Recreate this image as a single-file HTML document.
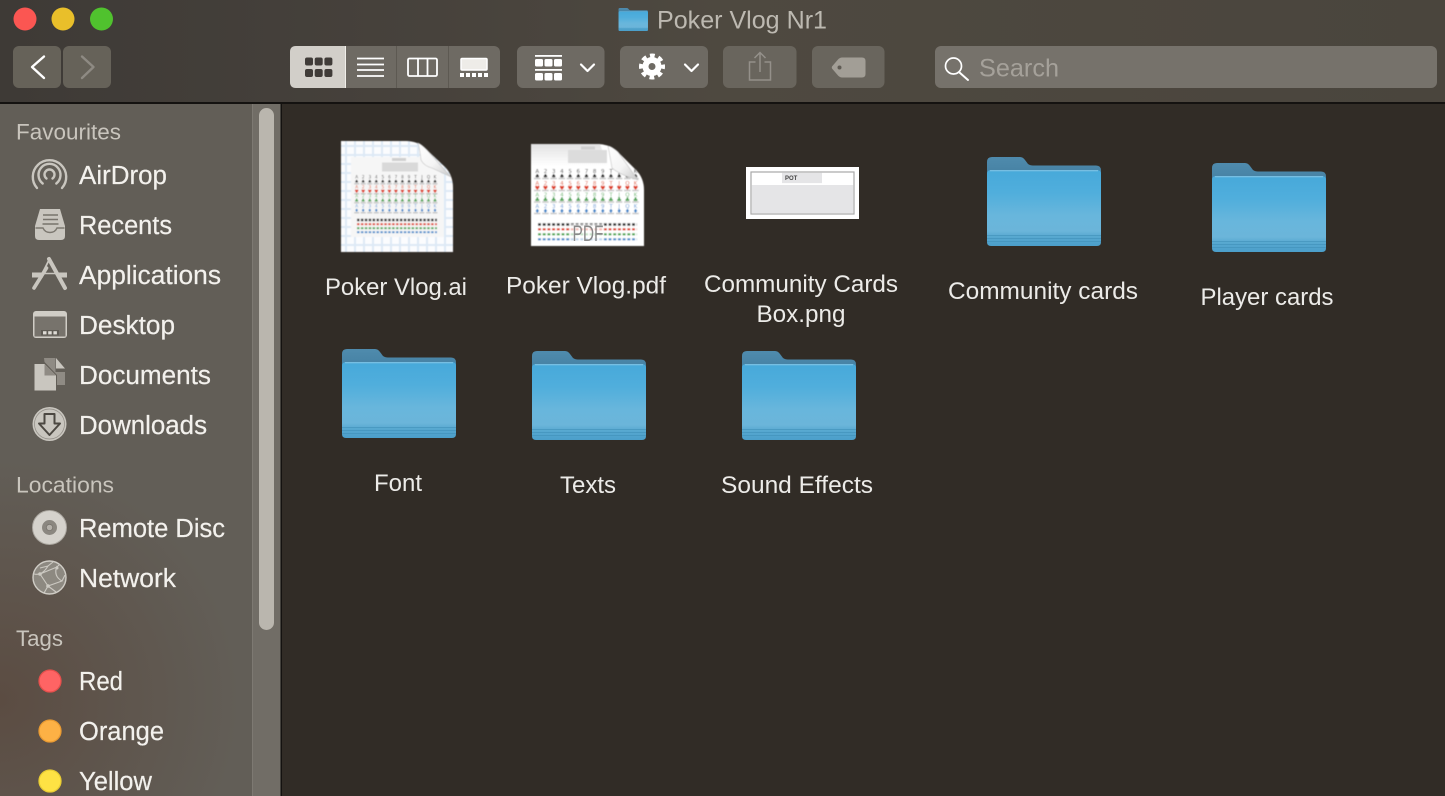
<!DOCTYPE html>
<html><head><meta charset="utf-8"><title>Poker Vlog Nr1</title>
<style>
html,body{margin:0;padding:0;background:#312c26;width:1445px;height:796px;overflow:hidden}
svg{display:block}
text{font-family:"Liberation Sans",sans-serif}
.s{font-size:25.5px;fill:#f3f1ed;stroke:#f3f1ed;stroke-width:.2}
.h{font-size:22px;fill:#c9c5bd}
.f{font-size:23.8px;fill:#ecebe8;text-anchor:middle}
.t{font-family:"DejaVu Sans","Liberation Sans",sans-serif;text-anchor:middle}
</style></head><body>
<svg width="1445" height="796" viewBox="0 0 1445 796" xmlns="http://www.w3.org/2000/svg">
<defs>
<linearGradient id="tb" x1="0" y1="0" x2="1" y2="0"><stop offset="0" stop-color="#3e3a36"/><stop offset=".3" stop-color="#47423c"/><stop offset=".5" stop-color="#4e4940"/><stop offset="1" stop-color="#4a453d"/></linearGradient>
<radialGradient id="br" gradientUnits="userSpaceOnUse" cx="0" cy="700" r="240"><stop offset="0" stop-color="#5b4c42"/><stop offset="1" stop-color="#5b4c42" stop-opacity="0"/></radialGradient>
<linearGradient id="fb" x1="0" y1="0" x2="0" y2="1"><stop offset="0" stop-color="#47a9da"/><stop offset=".3" stop-color="#50aedc"/><stop offset=".6" stop-color="#68b6dc"/><stop offset=".8" stop-color="#6bb5da"/><stop offset=".88" stop-color="#57a8d0"/><stop offset="1" stop-color="#4b9fca"/></linearGradient>
<linearGradient id="tab" x1="0" y1="0" x2="0" y2="1"><stop offset="0" stop-color="#4f8bad"/><stop offset="1" stop-color="#3f7a9c"/></linearGradient>
<linearGradient id="fold" x1="0" y1="0" x2="1" y2="1"><stop offset="0" stop-color="#ffffff"/><stop offset=".55" stop-color="#f4f4f4"/><stop offset="1" stop-color="#c8c8c8"/></linearGradient>
<linearGradient id="shade" x1="0" y1="0" x2="0" y2="1"><stop offset="0" stop-color="#e2e2e2"/><stop offset="1" stop-color="#ffffff"/></linearGradient>
<symbol id="folder" viewBox="0 0 114 89" width="114" height="89" overflow="visible">
<path d="M0 5Q0 0 5 0H33Q36 0 38 3L41 7Q43 8.500 46 8.500H109Q114 8.500 114 13.500V30H0Z" fill="url(#tab)"/>
<path d="M0 17Q0 13 4 13H110Q114 13 114 17V85Q114 89 110 89H4Q0 89 0 85Z" fill="url(#fb)"/>
<path d="M3 13.700H111" stroke="#86c6e4" stroke-width="1" fill="none"/>
<path d="M0 78.500H114M0 81.500H114M0 84.500H114" stroke="#3f90b9" stroke-width="1" opacity=".6"/>
</symbol>
<pattern id="grid" width="9" height="9" patternUnits="userSpaceOnUse" x="341" y="141"><rect width="9" height="9" fill="#fbfcfe"/><rect width="2" height="9" x="4" fill="#dde9f5"/><rect width="9" height="2" y="4" fill="#dde9f5"/></pattern>
<filter id="soft2" x="-5%" y="-5%" width="110%" height="110%"><feGaussianBlur stdDeviation=".45"/></filter>
</defs>

<!-- base -->
<rect width="1445" height="796" fill="#312c26"/>
<rect width="1445" height="102" fill="url(#tb)"/>
<rect y="102" width="1445" height="2" fill="#141210"/>
<rect y="104" width="252" height="692" fill="#625e57"/>
<rect y="104" width="252" height="692" fill="url(#br)"/>
<rect x="252" y="104" width="29" height="692" fill="#716d66"/>
<rect x="252" y="104" width="1" height="692" fill="#7d7972"/>
<rect x="280.500" y="104" width="1.500" height="692" fill="#141210"/>
<rect x="259" y="108" width="15" height="522" rx="7.5" fill="#bab6ae"/>

<!-- traffic lights -->
<circle cx="25" cy="19" r="11.5" fill="#fb5652"/>
<circle cx="63" cy="19" r="11.5" fill="#e9bf2a"/>
<circle cx="101.500" cy="19" r="11.5" fill="#50c22e"/>

<!-- title -->
<g transform="translate(618.5,8)"><use href="#folder" width="29.500" height="23"/></g>
<text x="657" y="28.500" font-size="25" fill="#bdb9b1" textLength="170" lengthAdjust="spacingAndGlyphs">Poker Vlog Nr1</text>

<!-- nav -->
<rect x="13" y="46" width="48" height="42" rx="6" fill="#666259"/>
<rect x="63" y="46" width="48" height="42" rx="6" fill="#666259"/>
<path d="M44 56.500L32 67L44 78" fill="none" stroke="#fff" stroke-width="2.400" stroke-linecap="round" stroke-linejoin="round"/>
<path d="M82 56.500L93.500 67L82 78" fill="none" stroke="#8e8a83" stroke-width="2.400" stroke-linecap="round" stroke-linejoin="round"/>

<!-- view segmented -->
<rect x="290" y="46" width="210" height="42" rx="6" fill="#6e6a63"/>
<path d="M296 46H345V88H296Q290 88 290 82V52Q290 46 296 46Z" fill="#d2cfc9"/>
<rect x="345" y="46" width="1" height="42" fill="#f0eee9"/>
<rect x="396" y="46" width="1" height="42" fill="#5d5952"/>
<rect x="448" y="46" width="1" height="42" fill="#5d5952"/>
<g fill="#403c38">
<rect x="305" y="57.500" width="8" height="8" rx="2"/><rect x="314.700" y="57.500" width="8" height="8" rx="2"/><rect x="324.400" y="57.500" width="8" height="8" rx="2"/>
<rect x="305" y="69" width="8" height="8" rx="2"/><rect x="314.700" y="69" width="8" height="8" rx="2"/><rect x="324.400" y="69" width="8" height="8" rx="2"/>
</g>
<path d="M357 58.500H384M357 64.500H384M357 70H384M357 76H384" stroke="#fff" stroke-width="1.700"/>
<rect x="408" y="58.500" width="29" height="17.500" rx="1.500" fill="none" stroke="#fff" stroke-width="1.800"/>
<path d="M418 58.500V76M427.500 58.500V76" stroke="#fff" stroke-width="1.800"/>
<rect x="461" y="58.500" width="26" height="11.500" rx="1" fill="#eeece8" stroke="#fff" stroke-width="1.500"/>
<g fill="#fff"><rect x="460" y="73" width="4" height="4"/><rect x="466" y="73" width="4" height="4"/><rect x="472" y="73" width="4" height="4"/><rect x="478" y="73" width="4" height="4"/><rect x="484" y="73" width="4" height="4"/></g>

<!-- arrange -->
<rect x="517" y="46" width="87.500" height="42" rx="6" fill="#6e6a63"/>
<g fill="#fff">
<rect x="535" y="55" width="27" height="1.800"/>
<rect x="535" y="59" width="8" height="7.500" rx="1.500"/><rect x="544.500" y="59" width="8" height="7.500" rx="1.500"/><rect x="554" y="59" width="8" height="7.500" rx="1.500"/>
<rect x="535" y="69" width="27" height="1.800"/>
<rect x="535" y="73" width="8" height="7.500" rx="1.500"/><rect x="544.500" y="73" width="8" height="7.500" rx="1.500"/><rect x="554" y="73" width="8" height="7.500" rx="1.500"/>
</g>
<path d="M581 64.500L587.500 71L594 64.500" fill="none" stroke="#fff" stroke-width="2.200" stroke-linecap="round" stroke-linejoin="round"/>

<!-- gear -->
<rect x="620" y="46" width="88" height="42" rx="6" fill="#6e6a63"/>
<circle cx="652" cy="66.500" r="6.500" fill="none" stroke="#fff" stroke-width="6"/>
<circle cx="652" cy="66.500" r="11" fill="none" stroke="#fff" stroke-width="4" stroke-dasharray="4.800 3.840" stroke-dashoffset="2.400"/>
<path d="M685 64.500L691.500 71L698 64.500" fill="none" stroke="#fff" stroke-width="2.200" stroke-linecap="round" stroke-linejoin="round"/>

<!-- share -->
<rect x="723" y="46" width="73.500" height="42" rx="6" fill="#69655d"/>
<path d="M755.500 62H749.500V80H770.500V62H764.500M760 72V53M754.500 58L760 52.500L765.500 58" fill="none" stroke="#94908a" stroke-width="1.500"/>

<!-- tag -->
<rect x="812" y="46" width="72.500" height="42" rx="6" fill="#69655d"/>
<path d="M842 57.500H862Q865.500 57.500 865.500 61V74Q865.500 77.500 862 77.500H842Q840 77.500 838 75.500L832 68.500Q831.500 67.500 832 66.500L838 59.500Q840 57.500 842 57.500Z" fill="#a29e96"/>
<circle cx="839.500" cy="67.500" r="2" fill="#5f5b54"/>

<!-- search -->
<rect x="935" y="46" width="502" height="42" rx="6" fill="#76726b"/>
<circle cx="953.500" cy="66" r="8" fill="none" stroke="#fff" stroke-width="1.700"/>
<path d="M959.500 72.500L968 80" stroke="#fff" stroke-width="2" stroke-linecap="round"/>
<text x="979" y="76.500" font-size="25" fill="#a5a19a" textLength="80" lengthAdjust="spacingAndGlyphs">Search</text>

<!-- sidebar labels -->
<text class="h" x="16" y="139.500" textLength="105" lengthAdjust="spacingAndGlyphs">Favourites</text>
<text class="s" x="79" y="184" textLength="88" lengthAdjust="spacingAndGlyphs">AirDrop</text>
<text class="s" x="79" y="234" textLength="93" lengthAdjust="spacingAndGlyphs">Recents</text>
<text class="s" x="79" y="284" textLength="142" lengthAdjust="spacingAndGlyphs">Applications</text>
<text class="s" x="79" y="334" textLength="96" lengthAdjust="spacingAndGlyphs">Desktop</text>
<text class="s" x="79" y="384" textLength="132" lengthAdjust="spacingAndGlyphs">Documents</text>
<text class="s" x="79" y="434" textLength="128" lengthAdjust="spacingAndGlyphs">Downloads</text>
<text class="h" x="16" y="492.500" textLength="98" lengthAdjust="spacingAndGlyphs">Locations</text>
<text class="s" x="79" y="537" textLength="146" lengthAdjust="spacingAndGlyphs">Remote Disc</text>
<text class="s" x="79" y="587" textLength="97" lengthAdjust="spacingAndGlyphs">Network</text>
<text class="h" x="16" y="646" textLength="47" lengthAdjust="spacingAndGlyphs">Tags</text>
<text class="s" x="79" y="690" textLength="44" lengthAdjust="spacingAndGlyphs">Red</text>
<text class="s" x="79" y="740" textLength="85" lengthAdjust="spacingAndGlyphs">Orange</text>
<text class="s" x="79" y="790" textLength="73" lengthAdjust="spacingAndGlyphs">Yellow</text>

<!-- sidebar icons -->
<g fill="none" stroke="#c9c6bf" stroke-width="2.400" stroke-linecap="round">
<path d="M37 188A16.700 16.700 0 1 1 62 188"/>
<path d="M42.700 183.500A11 11 0 1 1 56.300 183.500"/>
<path d="M46.500 178.500A5 5 0 1 1 52.500 178.500"/>
</g>
<!-- recents -->
<path d="M40 209H60L65 226V236Q65 240 61 240H39Q35 240 35 236V226Z" fill="#c9c6bf"/>
<path d="M43 215H58M43 219.500H58M42.500 224H58.500" stroke="#77736c" stroke-width="1.500"/>
<path d="M35.500 228H43Q45 232.500 50 232.500Q55 232.500 57 228H64.500" fill="none" stroke="#7c7870" stroke-width="1.500"/>
<!-- applications -->
<g stroke="#c9c6bf" stroke-linecap="round" fill="none">
<path d="M49 259L65 288" stroke-width="4"/>
<path d="M46.500 268L34 288" stroke-width="3.600"/>
<path d="M43 272L49 260" stroke-width="1.800"/>
<path d="M43 273.500H57" stroke-width="1.600"/>
</g>
<rect x="32" y="272.500" width="11" height="5" fill="#c9c6bf"/>
<rect x="57" y="272.500" width="10" height="5" fill="#c9c6bf"/>
<!-- desktop -->
<rect x="33" y="311" width="34" height="27" rx="3" fill="#d0cdc6"/>
<rect x="34.500" y="316.500" width="31" height="20" fill="#77736c"/>
<rect x="41" y="330" width="18" height="5.500" fill="#5f5b54"/>
<rect x="43" y="331.200" width="3.500" height="3.200" fill="#dedbd5"/><rect x="48.200" y="331.200" width="3.500" height="3.200" fill="#dedbd5"/><rect x="53.400" y="331.200" width="3.500" height="3.200" fill="#dedbd5"/>
<!-- documents -->
<path d="M44 358H55.500V372H65V385H57V375L44.500 362Z" fill="#8f8b84"/>
<path d="M56 358L65 368.500H56Z" fill="#c9c6bf"/>
<path d="M34.500 364H44.500L56 375.500V390.500H34.500Z" fill="#c9c6bf"/>
<path d="M44.500 364V375.500H56Z" fill="#8f8b84"/>
<!-- downloads -->
<circle cx="49.500" cy="424" r="17" fill="#c9c6bf"/>
<circle cx="49.500" cy="424" r="15" fill="none" stroke="#8f8b84" stroke-width=".7"/>
<path d="M44.500 414H54.500V423.500H60L49.500 435L39 423.500H44.500Z" fill="#c9c6bf" stroke="#4c4842" stroke-width="2" stroke-linejoin="round"/>
<!-- disc -->
<circle cx="49.500" cy="527.500" r="17" fill="#d5d2cc" stroke="#aaa69f" stroke-width="1"/>
<circle cx="49.500" cy="527.500" r="7.500" fill="#8b8780"/>
<circle cx="49.500" cy="527.500" r="3.200" fill="#b5b1aa" stroke="#77736c" stroke-width=".8"/>
<!-- network -->
<circle cx="49.500" cy="577.500" r="16.500" fill="#8d8981" stroke="#d0cdc6" stroke-width="1.400"/>
<path d="M34 574Q42 576 48 566L53 562M40 574L48 586L44 593M48 586L62 581M57 566Q53 576 62 581L65 575M48 586L56 592M40 574L57 567M40 568L48 566M57 567L60 564" fill="none" stroke="#cdcac3" stroke-width="1.100"/>
<circle cx="40" cy="574" r="1.800" fill="#cdcac3"/><circle cx="48" cy="586" r="1.800" fill="#cdcac3"/><circle cx="57" cy="568" r="1.500" fill="#cdcac3"/>
<!-- tags -->
<circle cx="50" cy="681" r="11" fill="#fe6464" stroke="#e44f4c" stroke-width="1.300"/>
<circle cx="50" cy="731" r="11" fill="#fdb145" stroke="#e89a32" stroke-width="1.300"/>
<circle cx="50" cy="781" r="11" fill="#fee244" stroke="#e8cc33" stroke-width="1.300"/>

<!-- Poker Vlog.ai -->
<g filter="url(#soft2)">
<path d="M341 141H406Q417 141 425 148L445 167Q453 175 453 188V252H341Z" fill="url(#grid)"/>
<path d="M351 157H420L444 175V237H351Z" fill="#f6f6f6"/>
<rect x="382" y="162.500" width="36" height="9" fill="#d9d9d9"/>
<rect x="392" y="158" width="14" height="3" fill="#cfcfcf"/>
<g stroke="#c8c8c8" stroke-width="1.500" stroke-dasharray="5 1.530" fill="none"><path d="M354.200 183.700H437.500M354.200 193.700H437.500M354.200 202.700H437.500M354.200 212.700H437.500"/></g>
<g font-size="4.200">
<text class="t" fill="#555" x="356.700 363.200 369.800 376.300 382.800 389.400 395.900 402.400 409 415.500 422 428.500 435" y="178.500">A23456789TJQK</text>
<text class="t" font-size="4.800" fill="#222" x="356.700 363.200 369.800 376.300 382.800 389.400 395.900 402.400 409 415.500 422 428.500 435" y="183">♠♠♠♠♠♠♠♠♠♠♠♠♠</text>
<text class="t" fill="#e2603f" x="356.700 363.200 369.800 376.300 382.800 389.400 395.900 402.400 409 415.500 422 428.500 435" y="188.500">A23456789TJQK</text>
<text class="t" font-size="4.800" fill="#dd3a20" x="356.700 363.200 369.800 376.300 382.800 389.400 395.900 402.400 409 415.500 422 428.500 435" y="193">♥♥♥♥♥♥♥♥♥♥♥♥♥</text>
<text class="t" fill="#6cb870" x="356.700 363.200 369.800 376.300 382.800 389.400 395.900 402.400 409 415.500 422 428.500 435" y="197.500">A23456789TJQK</text>
<text class="t" font-size="4.800" fill="#3e9e46" x="356.700 363.200 369.800 376.300 382.800 389.400 395.900 402.400 409 415.500 422 428.500 435" y="202">♣♣♣♣♣♣♣♣♣♣♣♣♣</text>
<text class="t" fill="#6a9fd8" x="356.700 363.200 369.800 376.300 382.800 389.400 395.900 402.400 409 415.500 422 428.500 435" y="207.500">A23456789TJQK</text>
<text class="t" font-size="4.800" fill="#3f86c9" x="356.700 363.200 369.800 376.300 382.800 389.400 395.900 402.400 409 415.500 422 428.500 435" y="212">♦♦♦♦♦♦♦♦♦♦♦♦♦</text>
</g>
<g fill="none" stroke-dasharray="2.500 1.400">
<path d="M357 220H437" stroke="#333" stroke-width="2.400"/>
<path d="M357 224.200H437" stroke="#de3b22" stroke-width="1.800"/>
<path d="M357 228.200H437" stroke="#4aa650" stroke-width="1.800"/>
<path d="M357 232.200H437" stroke="#4a8ccb" stroke-width="1.800"/>
</g>
<path d="M418 143Q420 150 421 160Q424 166 432 168L451 177L427 150Q421 144 418 143Z" fill="url(#fold)" stroke="#c0c0c0" stroke-width=".6"/>
</g>

<!-- Poker Vlog.pdf -->
<g filter="url(#soft2)">
<path d="M531 144H597Q608 144 616 150L636 170Q644 178 644 190V246H531Z" fill="#fff"/>
<path d="M531 144H600L608 166H531Z" fill="url(#shade)"/>
<rect x="568" y="150" width="39" height="13" fill="#dcdcdc"/>
<rect x="581" y="146.500" width="14" height="3" fill="#d0d0d0"/>
<g stroke="#c8c8c8" stroke-width="1.600" stroke-dasharray="6.500 1.690" fill="none"><path d="M534 178.500H640M534 190.500H640M534 202H640M534 213.500H640"/></g>
<g font-size="5.500">
<text class="t" fill="#444" x="537.300 545.500 553.700 561.900 570.100 578.300 586.500 594.600 602.800 611 619.200 627.400 635.600" y="173">A23456789TJQK</text>
<text class="t" font-size="6" fill="#222" x="537.300 545.500 553.700 561.900 570.100 578.300 586.500 594.600 602.800 611 619.200 627.400 635.600" y="178">♠♠♠♠♠♠♠♠♠♠♠♠♠</text>
<text class="t" fill="#e2603f" x="537.300 545.500 553.700 561.900 570.100 578.300 586.500 594.600 602.800 611 619.200 627.400 635.600" y="185">A23456789TJQK</text>
<text class="t" font-size="6" fill="#dd3a20" x="537.300 545.500 553.700 561.900 570.100 578.300 586.500 594.600 602.800 611 619.200 627.400 635.600" y="190">♥♥♥♥♥♥♥♥♥♥♥♥♥</text>
<text class="t" fill="#6cb870" x="537.300 545.500 553.700 561.900 570.100 578.300 586.500 594.600 602.800 611 619.200 627.400 635.600" y="196.500">A23456789TJQK</text>
<text class="t" font-size="6" fill="#3e9e46" x="537.300 545.500 553.700 561.900 570.100 578.300 586.500 594.600 602.800 611 619.200 627.400 635.600" y="201.500">♣♣♣♣♣♣♣♣♣♣♣♣♣</text>
<text class="t" fill="#6a9fd8" x="537.300 545.500 553.700 561.900 570.100 578.300 586.500 594.600 602.800 611 619.200 627.400 635.600" y="208">A23456789TJQK</text>
<text class="t" font-size="6" fill="#3f86c9" x="537.300 545.500 553.700 561.900 570.100 578.300 586.500 594.600 602.800 611 619.200 627.400 635.600" y="213">♦♦♦♦♦♦♦♦♦♦♦♦♦</text>
</g>
<g fill="none" stroke-dasharray="3 1.700">
<path d="M538 224.500H637" stroke="#333" stroke-width="2.600"/>
<path d="M538 229.300H637" stroke="#de3b22" stroke-width="2.200"/>
<path d="M538 234.300H637" stroke="#4aa650" stroke-width="2.200"/>
<path d="M538 239.300H637" stroke="#4a8ccb" stroke-width="2.200"/>
</g>
<rect x="571" y="224" width="33" height="18" fill="#fff" opacity=".65"/>
<path d="M608 146Q610 156 612 168Q620 175 638 180L618 152Q611 146 608 146Z" fill="url(#fold)" stroke="#c0c0c0" stroke-width=".6"/>
</g>
<text x="588" y="241" text-anchor="middle" font-size="22" fill="#8a8a8a" textLength="31" lengthAdjust="spacingAndGlyphs">PDF</text>

<!-- PNG -->
<rect x="746" y="167" width="113" height="52" fill="#fff"/>
<rect x="751" y="172" width="103" height="42" fill="#fff" stroke="#a8a8a8" stroke-width="1.200"/>
<rect x="751.600" y="185" width="101.800" height="28.400" fill="#e5e5e7"/>
<rect x="782" y="172.600" width="40" height="10.500" fill="#e5e5e7"/>
<text x="785" y="180" font-size="6" font-weight="bold" fill="#444">POT</text>

<!-- folders -->
<use href="#folder" x="987" y="157"/>
<use href="#folder" x="1212" y="163"/>
<use href="#folder" x="342" y="349"/>
<use href="#folder" x="532" y="351"/>
<use href="#folder" x="742" y="351"/>

<!-- file labels -->
<text class="f" x="396" y="295" textLength="142" lengthAdjust="spacingAndGlyphs">Poker Vlog.ai</text>
<text class="f" x="586" y="293.500" textLength="160" lengthAdjust="spacingAndGlyphs">Poker Vlog.pdf</text>
<text class="f" x="801" y="292" textLength="194" lengthAdjust="spacingAndGlyphs">Community Cards</text>
<text class="f" x="801" y="322" textLength="89" lengthAdjust="spacingAndGlyphs">Box.png</text>
<text class="f" x="1043" y="299" textLength="190" lengthAdjust="spacingAndGlyphs">Community cards</text>
<text class="f" x="1267" y="305" textLength="133" lengthAdjust="spacingAndGlyphs">Player cards</text>
<text class="f" x="398" y="491" textLength="48" lengthAdjust="spacingAndGlyphs">Font</text>
<text class="f" x="588" y="493" textLength="56" lengthAdjust="spacingAndGlyphs">Texts</text>
<text class="f" x="797" y="493" textLength="152" lengthAdjust="spacingAndGlyphs">Sound Effects</text>
</svg>
</body></html>
